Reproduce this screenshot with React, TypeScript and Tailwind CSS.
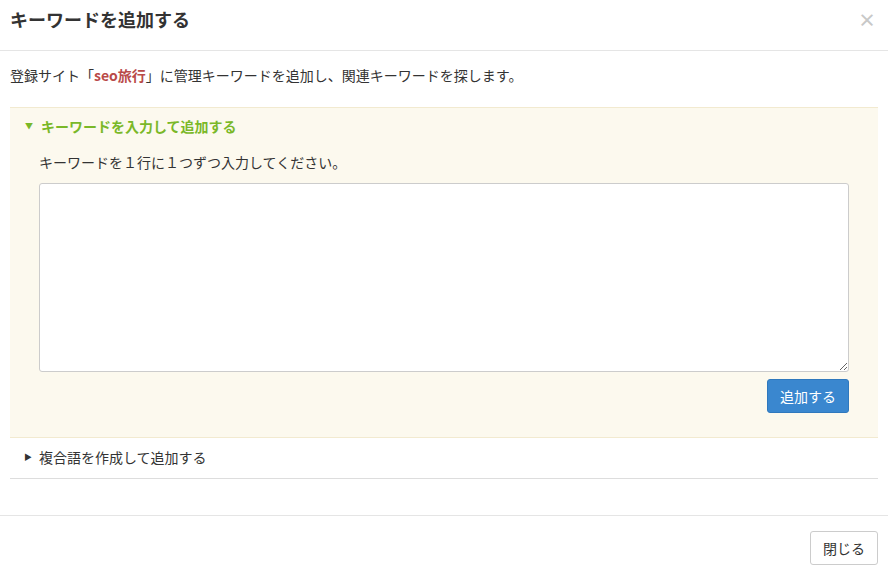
import React from 'react';

const font = { fontFamily: '"Noto Sans CJK JP", "Noto Sans", sans-serif' };

export default function App() {
  return (
    <div className="w-[888px] h-[575px] bg-white text-[#333] text-[14px] flex flex-col" style={font}>
      {/* header */}
      <div className="h-[51px] flex items-center justify-between pl-[10px] pr-[12px] pb-[12px] border-b border-[#e5e5e5] shrink-0">
        <h1 className="text-[18px] font-bold leading-none">キーワードを追加する</h1>
        <span className="text-[#c8c8c8] text-[18px] font-bold leading-none">×</span>
      </div>

      {/* body */}
      <div className="px-[10px] flex-1">
        <p className="h-[56px] flex items-center pb-[8px] leading-none">
          登録サイト「<span className="text-[#b94a48] font-bold">seo旅行</span>」に管理キーワードを追加し、関連キーワードを探します。
        </p>

        <div className="border-t border-b border-[#f2ead0] bg-[#fcf9ee]">
          <div className="h-[40px] flex items-center pl-[15px] pb-[4px] text-[#7ab828] font-bold leading-none">
            <span className="text-[8px] mr-[8px]">▼</span>
            キーワードを入力して追加する
          </div>
          <div className="pl-[29px] pr-[29px] pb-[24px]">
            <p className="h-[35px] flex items-center pb-[8px] leading-none">キーワードを１行に１つずつ入力してください。</p>
            <textarea
              className="block w-full h-[189px] bg-white border border-[#ccc] rounded-[3px] resize-y outline-none"
            />
            <div className="flex justify-end mt-[7px]">
              <button className="h-[34px] px-[12px] bg-[#3a87cf] border border-[#2f78bd] text-white rounded-[3px] text-[14px] leading-none">
                追加する
              </button>
            </div>
          </div>
        </div>

        <div className="h-[41px] flex items-center pl-[14px] pb-[2px] border-b border-[#ddd]">
          <span className="text-[8px] mr-[7px]">▶</span>
          複合語を作成して追加する
        </div>
      </div>

      {/* footer */}
      <div className="h-[60px] border-t border-[#e5e5e5] flex items-start justify-end pt-[15px] pr-[10px] shrink-0">
        <button className="h-[34px] px-[12px] bg-white border border-[#ccc] rounded-[3px] text-[14px] text-[#333] leading-none">
          閉じる
        </button>
      </div>
    </div>
  );
}
